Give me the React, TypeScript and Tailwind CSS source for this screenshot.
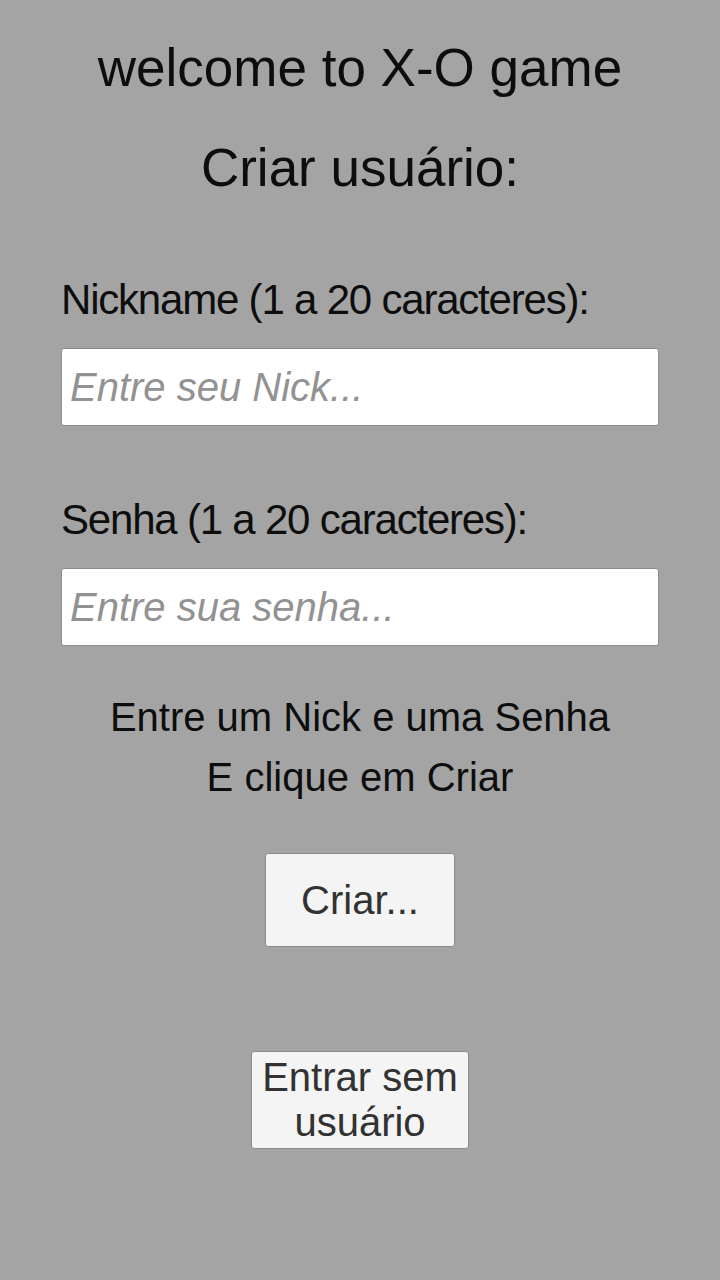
import React, { useState } from 'react'

const font = { fontFamily: '"Liberation Sans", Arial, sans-serif' }

const App: React.FC = () => {
  const [nick, setNick] = useState('')
  const [senha, setSenha] = useState('')

  return (
    <div
      className="w-full min-h-[1280px] bg-[#a4a4a4] flex flex-col items-center px-[61px] text-[#0d0d0d]"
      style={font}
    >
      {/* Titles */}
      <h1 className="mt-[38px] text-[53px] leading-[60px] font-normal text-center">
        welcome to X-O game
      </h1>
      <h2 className="mt-[40px] text-[53px] leading-[60px] font-normal text-center">
        Criar usuário:
      </h2>

      {/* Nickname */}
      <label className="mt-[79px] self-stretch text-[42px] leading-[46px] tracking-[-1.2px]">
        Nickname (1 a 20 caracteres):
      </label>
      <input
        value={nick}
        onChange={(e) => setNick(e.target.value)}
        placeholder="Entre seu Nick..."
        className="mt-[25px] self-stretch h-[78px] bg-white border border-[#8c8c8c] rounded-[3px] pl-[8px] text-[40px] outline-none placeholder:italic placeholder:text-[#929292]"
        style={font}
      />

      {/* Senha */}
      <label className="mt-[71px] self-stretch text-[42px] leading-[46px] tracking-[-1.2px]">
        Senha (1 a 20 caracteres):
      </label>
      <input
        type="password"
        value={senha}
        onChange={(e) => setSenha(e.target.value)}
        placeholder="Entre sua senha..."
        className="mt-[25px] self-stretch h-[78px] bg-white border border-[#8c8c8c] rounded-[3px] pl-[8px] text-[40px] outline-none placeholder:italic placeholder:text-[#929292]"
        style={font}
      />

      {/* Status message */}
      <p className="mt-[41px] text-[40px] leading-[60px] text-center">
        Entre um Nick e uma Senha
        <br />
        E clique em Criar
      </p>

      {/* Buttons */}
      <button
        className="mt-[46px] w-[190px] h-[94px] bg-[#f4f4f4] border border-[#8c8c8c] rounded-[3px] text-[40px] text-[#323232]"
        style={font}
      >
        Criar...
      </button>
      <button
        className="mt-[104px] w-[218px] h-[98px] bg-[#f4f4f4] border border-[#8c8c8c] rounded-[3px] text-[40px] leading-[45px] text-[#323232]"
        style={font}
      >
        Entrar sem
        <br />
        usuário
      </button>
    </div>
  )
}

export default App
